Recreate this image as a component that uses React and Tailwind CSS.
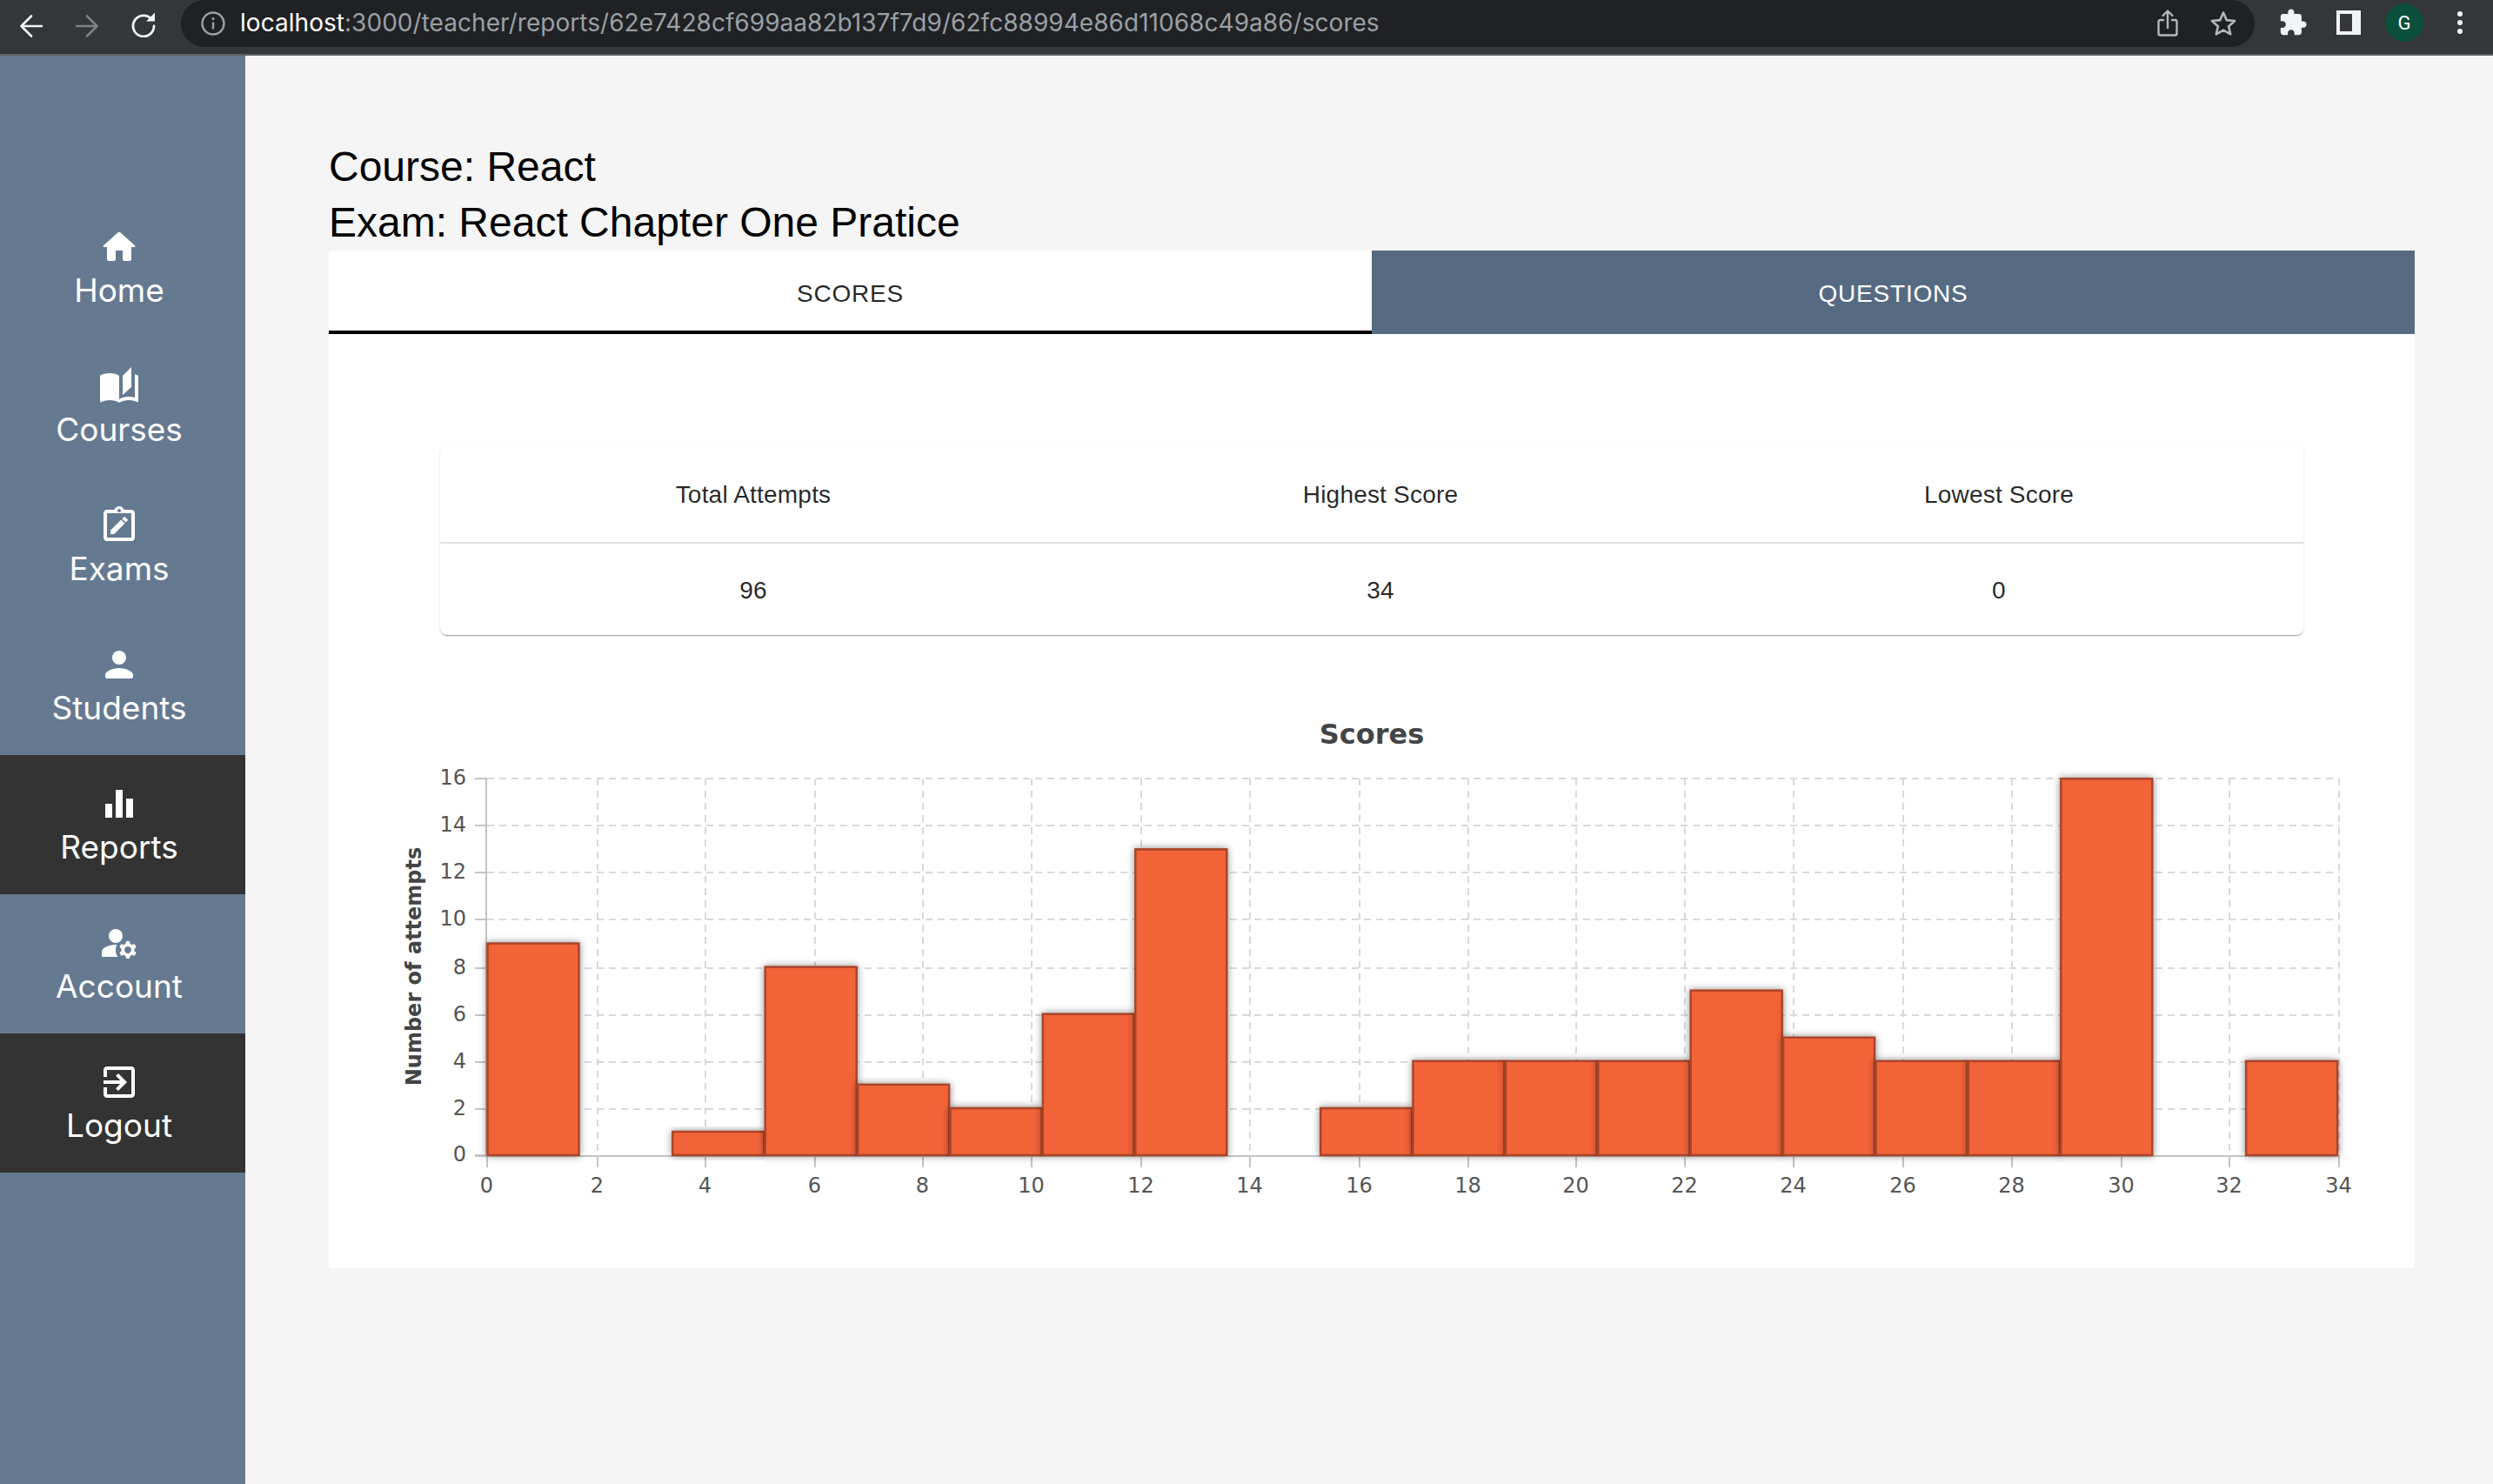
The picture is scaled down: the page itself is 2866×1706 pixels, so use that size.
const bins = [9, 0, 1, 8, 3, 2, 6, 13, 0, 2, 4, 4, 4, 7, 5, 4, 4, 16, 0, 4]
const xTicks = [
  [0, 560], [2, 687], [4, 811], [6, 937], [8, 1061], [10, 1186], [12, 1312], [14, 1437], [16, 1563],
  [18, 1688], [20, 1812], [22, 1937], [24, 2062], [26, 2188], [28, 2313], [30, 2439], [32, 2563], [34, 2689],
]
const yTicks = [[16, 895], [14, 949], [12, 1003], [10, 1057], [8, 1113], [6, 1167], [4, 1221], [2, 1275], [0, 1328]]

function Icon({ children, className = 'w-12 h-12' }) {
  return (
    <svg className={className} viewBox="0 0 24 24" fill="currentColor">
      {children}
    </svg>
  )
}

const navItems = [
  {
    label: 'Home',
    icon: <path d="M10 19v-5h4v5c0 .55.45 1 1 1h3c.55 0 1-.45 1-1v-7h1.7c.46 0 .68-.57.33-.87L12.67 3.6c-.38-.34-.96-.34-1.34 0l-8.36 7.53c-.34.3-.13.87.33.87H5v7c0 .55.45 1 1 1h3c.55 0 1-.45 1-1z" />,
  },
  {
    label: 'Courses',
    icon: <path d="M19 1l-5 5v11l5-4.5V1zM1 6v14.65c0 .25.25.5.5.5.1 0 .15-.05.25-.05C3.1 20.45 5.05 20 6.5 20c1.95 0 4.05.4 5.5 1.5V6c-1.45-1.1-3.55-1.5-5.5-1.5S2.45 4.9 1 6zm22 13.5V6c-.6-.45-1.25-.8-2-1.05v13.5c-1.1-.35-2.3-.5-3.5-.5-1.7 0-4.15.65-5.5 1.5v2.05c1.35-.85 3.8-1.5 5.5-1.5 1.65 0 3.35.3 4.75 1.05.1.05.15.05.25.05.25 0 .5-.25.5-.5v-1.1z" />,
  },
  {
    label: 'Exams',
    icon: (
      <>
        <path fillRule="evenodd" d="M19 3h-4.18C14.4 1.84 13.3 1 12 1s-2.4.84-2.82 2H5c-1.1 0-2 .9-2 2v14c0 1.1.9 2 2 2h14c1.1 0 2-.9 2-2V5c0-1.1-.9-2-2-2zM12 2.5c.55 0 1 .45 1 1s-.45 1-1 1-1-.45-1-1 .45-1 1-1zM19 19H5V5h14v14z" />
        <path d="M7 14.9V17h2.1l6.1-6.1-2.1-2.1L7 14.9zM16.8 9.3c.2-.2.2-.55 0-.75l-1.35-1.35c-.2-.2-.55-.2-.75 0l-1 1 2.1 2.1 1-1z" />
      </>
    ),
  },
  {
    label: 'Students',
    icon: <path d="M12 12c2.21 0 4-1.79 4-4s-1.79-4-4-4-4 1.79-4 4 1.79 4 4 4zm0 2c-2.67 0-8 1.34-8 4v1c0 .55.45 1 1 1h14c.55 0 1-.45 1-1v-1c0-2.66-5.33-4-8-4z" />,
  },
  {
    label: 'Reports',
    active: true,
    icon: <path d="M4 12h4v8H4zM10 4h4v16h-4zM16 9h4v11h-4z" />,
  },
  {
    label: 'Account',
    icon: (
      <>
        <circle cx="10" cy="8" r="4" />
        <path d="M10.67 13.02c-.22-.01-.44-.02-.67-.02-2.42 0-4.68.67-6.61 1.82-.88.52-1.39 1.5-1.39 2.53V20h9.26c-.79-1.13-1.26-2.51-1.26-4 0-1.07.25-2.07.67-2.98z" />
        <path d="M20.75 16c0-.22-.03-.42-.06-.63l1.14-1.01-1-1.73-1.45.49c-.32-.27-.68-.48-1.08-.63L18 11h-2l-.3 1.49c-.4.15-.76.36-1.08.63l-1.45-.49-1 1.73 1.14 1.01c-.03.21-.06.41-.06.63s.03.42.06.63l-1.14 1.01 1 1.73 1.45-.49c.32.27.68.48 1.08.63L16 21h2l.3-1.49c.4-.15.76-.36 1.08-.63l1.45.49 1-1.73-1.14-1.01c.03-.21.06-.41.06-.63zM17 18c-1.1 0-2-.9-2-2s.9-2 2-2 2 .9 2 2-.9 2-2 2z" />
      </>
    ),
  },
  {
    label: 'Logout',
    active: true,
    icon: <path d="M10.09 15.59L11.5 17l5-5-5-5-1.41 1.41L12.67 11H3v2h9.67l-2.58 2.59zM19 3H5c-1.11 0-2 .9-2 2v4h2V5h14v14H5v-4H3v4c0 1.1.89 2 2 2h14c1.1 0 2-.9 2-2V5c0-1.1-.9-2-2-2z" />,
  },
]

function BrowserBar() {
  return (
    <div className="h-16 shrink-0 flex bg-[#35363a] border-b-2 border-[#5f6064] font-['Inter',sans-serif]">
      <div className="w-[208px] shrink-0 flex items-center">
        <svg className="ml-[22px] w-[28px] h-[28px] mb-[2px] text-[#f1f3f4]" viewBox="0 0 28 28" fill="none" stroke="currentColor" strokeWidth="2.6" strokeLinecap="round" strokeLinejoin="round">
          <path d="M26 14H3M14 2.5 2.5 14 14 25.5" />
        </svg>
        <svg className="ml-[36px] w-[28px] h-[28px] mb-[2px] text-[#7f8184]" viewBox="0 0 28 28" fill="none" stroke="currentColor" strokeWidth="2.6" strokeLinecap="round" strokeLinejoin="round">
          <path d="M2 14h23M14 2.5 25.5 14 14 25.5" />
        </svg>
        <svg className="ml-[36px] w-[30px] h-[30px] mb-[6px] text-[#f1f3f4]" viewBox="0 0 30 30" fill="none">
          <path d="M24.5 9.5A12 12 0 1 0 27 17" stroke="currentColor" strokeWidth="2.8" strokeLinecap="round" />
          <path d="M18 11.5h10V1.5z" fill="currentColor" />
        </svg>
      </div>
      <div className="w-[2384px] h-[54px] rounded-[27px] bg-[#202124] flex items-center">
        <svg className="ml-[23px] w-[28px] h-[28px] text-[#9aa0a6]" viewBox="0 0 28 28" fill="none" stroke="currentColor" strokeWidth="2.4">
          <circle cx="14" cy="14" r="12.5" />
          <path d="M14 12.5v8" />
          <circle cx="14" cy="8.5" r="1.6" fill="currentColor" stroke="none" />
        </svg>
        <div className="ml-[17px] mb-[2px] text-[28px] leading-[34px] text-[#9aa0a6] whitespace-nowrap tracking-[0.04px]">
          <span className="text-white">localhost</span>:3000/teacher/reports/62e7428cf699aa82b137f7d9/62fc88994e86d11068c49a86/scores
        </div>
        <div className="flex-1" />
        <svg className="w-[24px] h-[32px] text-[#b5b7b9]" viewBox="0 0 24 32" fill="none" stroke="currentColor" strokeWidth="2.4" strokeLinecap="round" strokeLinejoin="round">
          <path d="M7 12H3.5a2 2 0 0 0-2 2v13.5a2 2 0 0 0 2 2h17a2 2 0 0 0 2-2V14a2 2 0 0 0-2-2H17M12 21V2M6.5 7 12 1.5 17.5 7" />
        </svg>
        <svg className="ml-[36px] mr-[20px] w-[32px] h-[32px] text-[#b5b7b9]" viewBox="0 0 32 32" fill="none" stroke="currentColor" strokeWidth="2.6" strokeLinejoin="round">
          <path d="M16 3.5l3.8 8.6 9.4.9-7.1 6.2 2.1 9.2-8.2-4.8-8.2 4.8 2.1-9.2L2.8 13l9.4-.9z" />
        </svg>
      </div>
      <div className="flex-1 flex items-start">
        <div className="ml-[27px] mt-[9px] text-[#f1f3f4]">
          <svg className="w-[34px] h-[34px]" viewBox="0 0 24 24" fill="currentColor">
            <path d="M20.5 11H19V7c0-1.1-.9-2-2-2h-4V3.5C13 2.12 11.88 1 10.5 1S8 2.12 8 3.5V5H4c-1.1 0-1.99.9-1.99 2v3.8H3.5c1.49 0 2.7 1.21 2.7 2.7s-1.21 2.7-2.7 2.7H2V20c0 1.1.9 2 2 2h3.8v-1.5c0-1.49 1.21-2.7 2.7-2.7 1.49 0 2.7 1.21 2.7 2.7V22H17c1.1 0 2-.9 2-2v-4h1.5c1.38 0 2.5-1.12 2.5-2.5S21.88 11 20.5 11z" />
          </svg>
        </div>
        <div className="ml-[33px] mt-[12px] w-[28px] h-[28px] bg-[#f1f3f4] flex">
          <div className="ml-[4px] mt-[4px] w-[14px] h-[20px] bg-[#35363a]" />
        </div>
        <div className="ml-[28px] mt-[4px] w-[44px] h-[44px] rounded-full bg-[#0b4f3c] flex items-center justify-center text-white text-[22px] font-['Roboto',sans-serif]">
          G
        </div>
        <div className="ml-[39px] mt-[13px] flex flex-col gap-[4px]">
          <span className="w-[6px] h-[6px] rounded-full bg-[#f1f3f4]" />
          <span className="w-[6px] h-[6px] rounded-full bg-[#f1f3f4]" />
          <span className="w-[6px] h-[6px] rounded-full bg-[#f1f3f4]" />
        </div>
      </div>
    </div>
  )
}

function Sidebar() {
  return (
    <div className="w-[282px] shrink-0 bg-[#657a91] pt-[164px] font-['Inter',sans-serif]">
      {navItems.map((item) => (
        <div
          key={item.label}
          className={`h-[160px] pt-8 pr-2 flex flex-col items-center text-white ${item.active ? 'bg-[#333333]' : ''}`}
        >
          <Icon>{item.icon}</Icon>
          <div className="mt-[2px] text-[37px] leading-[48px]">{item.label}</div>
        </div>
      ))}
    </div>
  )
}

function ScoresTable() {
  return (
    <div className="mx-32 rounded-lg bg-white shadow-[0_2px_1px_-1px_rgba(0,0,0,0.2),0_1px_1px_0_rgba(0,0,0,0.14),0_1px_3px_0_rgba(0,0,0,0.12)] text-[28px] tracking-[0.2px] text-black/85">
      <div className="grid grid-cols-[720px_722px_1fr] h-[113px] pt-[2px] items-center text-center border-b-2 border-[#e0e0e0]">
        <div>Total Attempts</div>
        <div>Highest Score</div>
        <div>Lowest Score</div>
      </div>
      <div className="grid grid-cols-[720px_722px_1fr] h-[105px] pt-[2px] items-center text-center">
        <div>96</div>
        <div>34</div>
        <div>0</div>
      </div>
    </div>
  )
}

function Histogram() {
  const pitch = 106.4
  const barW = 105
  const unit = 27.05
  const font = "'DejaVu Sans', sans-serif"

  return (
    <svg className="block mt-[60px] w-[2398px] h-[668px]" viewBox="378 790 2398 668" style={{ fontFamily: font }}>
      <defs>
        <filter id="barShadow" x="-20%" y="-20%" width="140%" height="140%">
          <feDropShadow dx="0" dy="0" stdDeviation="4" floodColor="#000" floodOpacity="0.45" />
        </filter>
      </defs>

      <text x="1577" y="855" textAnchor="middle" fontSize="32" fontWeight="700" fill="#444">Scores</text>
      <text transform="translate(484 1111) rotate(-90)" textAnchor="middle" fontSize="24" fontWeight="700" fill="#444">Number of attempts</text>

      {/* grid */}
      {yTicks.slice(0, -1).map(([v, y]) => (
        <line key={v} x1="560" x2="2689" y1={y} y2={y} stroke="#d9d9d9" strokeWidth="2" strokeDasharray="8 6" />
      ))}
      {xTicks.slice(1).map(([v, x]) => (
        <line key={v} x1={x} x2={x} y1="895" y2="1328" stroke="#d9d9d9" strokeWidth="2" strokeDasharray="8 6" />
      ))}

      {/* axes */}
      <line x1="559" x2="559" y1="894" y2="1329" stroke="#c4c4c4" strokeWidth="2" />
      <line x1="546" x2="2690" y1="1329" y2="1329" stroke="#c4c4c4" strokeWidth="2" />
      {yTicks.map(([v, y]) => (
        <g key={v}>
          <line x1="546" x2="559" y1={y} y2={y} stroke="#c4c4c4" strokeWidth="2" />
          <text x="536" y={y + 7} textAnchor="end" fontSize="24" fill="#555">{v}</text>
        </g>
      ))}
      {xTicks.map(([v, x]) => (
        <g key={v}>
          <line x1={x} x2={x} y1="1329" y2="1342" stroke="#c4c4c4" strokeWidth="2" />
          <text x={x - 0.5} y="1371" textAnchor="middle" fontSize="24" fill="#555">{v}</text>
        </g>
      ))}

      {/* bars */}
      {bins.map((n, i) =>
        n > 0 ? (
          <rect
            key={i}
            x={560.5 + i * pitch}
            y={1328 - n * unit}
            width={barW}
            height={n * unit}
            fill="#f26337"
            stroke="#a8452a"
            strokeWidth="2.5"
            filter="url(#barShadow)"
          />
        ) : null
      )}
    </svg>
  )
}

export default function App() {
  return (
    <div className="min-h-[1706px] h-[1706px] flex flex-col bg-[#f5f5f5] overflow-hidden">
      <BrowserBar />
      <div className="flex-1 flex">
        <Sidebar />
        <div className="flex-1 pt-24 pl-24 pr-[90px] font-['Liberation_Sans',sans-serif]">
          <div className="text-[48px] leading-[64px] text-black">
            <div>Course: React</div>
            <div>Exam: React Chapter One Pratice</div>
          </div>
          <div className="flex h-24 text-[28px] tracking-[0.8px]">
            <div className="flex-1 flex items-center justify-center pt-[8px] bg-white text-black/85 border-b-4 border-black">SCORES</div>
            <div className="flex-1 flex items-center justify-center pt-[4px] bg-[#566b82] text-white">QUESTIONS</div>
          </div>
          <div className="bg-white pt-32 h-[1074px]">
            <ScoresTable />
            <Histogram />
          </div>
        </div>
      </div>
    </div>
  )
}
